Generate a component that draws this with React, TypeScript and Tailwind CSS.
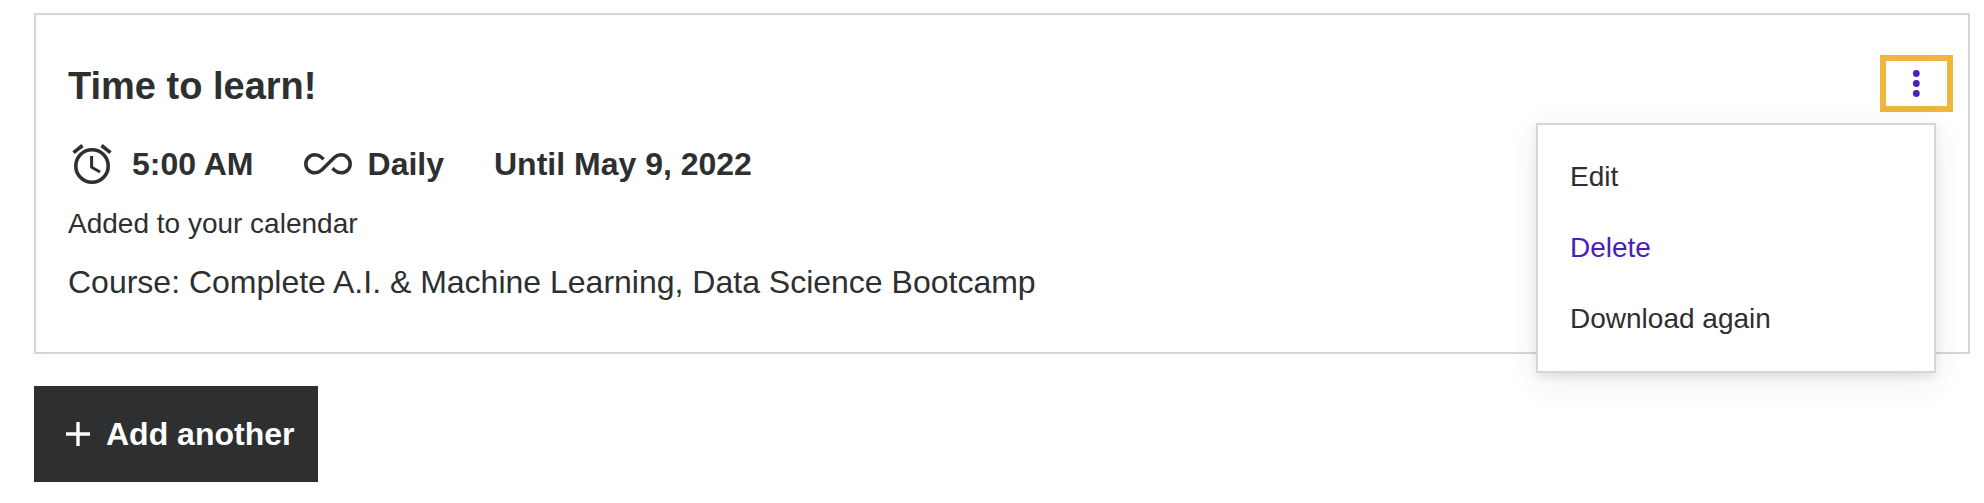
import { useState } from "react";

const menuItems = ["Edit", "Delete", "Download again"];

const AlarmIcon = () => (
  <svg
    className="size-12 shrink-0"
    viewBox="0 0 48 48"
    fill="none"
    stroke="currentColor"
    strokeWidth="3.6"
    aria-hidden="true"
  >
    <circle cx="24" cy="26" r="16.2" />
    <path d="M5.5 12.7 L14.5 5.5 M33.5 5.5 L42.5 12.7" />
    <path d="M23.6 16 V27.2 L32 32" strokeWidth="3" />
  </svg>
);

const InfinityIcon = () => (
  <svg
    className="size-12 shrink-0"
    viewBox="0 0 48 48"
    fill="none"
    stroke="currentColor"
    strokeWidth="3.5"
    aria-hidden="true"
  >
    <path d="M19.6 19.2 L17.4 17.3 C15.6 15.6 13.5 14.8 10.8 14.8 A9 9 0 0 0 10.8 32.8 C13.5 32.8 15.5 32 17.4 30.3 L30.6 17.3 C32.5 15.6 34.5 14.8 37.2 14.8 A9 9 0 0 1 37.2 32.8 C34.5 32.8 32.4 32 30.6 30.3 L28.4 28.4" />
  </svg>
);

const PlusIcon = () => (
  <svg
    className="size-10 shrink-0"
    viewBox="0 0 40 40"
    fill="none"
    stroke="currentColor"
    strokeWidth="3.4"
    aria-hidden="true"
  >
    <path d="M20 8 V32 M8 20 H32" />
  </svg>
);

export default function App() {
  const [isOpen, setIsOpen] = useState(true);

  return (
    <main className="bg-white pt-[13px] pr-[14px] pl-[34px] font-['Liberation_Sans',Arial,sans-serif] text-[#2d2f31]">
      <section className="relative border-2 border-[#d1d7dc] px-8 pt-[48px] pb-[48px]">
        <h2 className="text-[38px] leading-[46px] font-bold">
          Time to learn!
        </h2>
        <div className="mt-[31px] flex items-center gap-[50px] text-[32px] leading-[48px] font-bold">
          <div className="flex items-center gap-4">
            <AlarmIcon />
            <span>5:00 AM</span>
          </div>
          <div className="flex items-center gap-4">
            <InfinityIcon />
            <span>Daily</span>
          </div>
          <span>Until May 9, 2022</span>
        </div>
        <p className="mt-4 text-[28px] leading-[40px]">
          Added to your calendar
        </p>
        <p className="mt-4 text-[32px] leading-[44px]">
          Course: Complete A.I. &amp; Machine Learning, Data Science Bootcamp
        </p>

        <div className="absolute top-10 right-[15px]">
          <button
            aria-label="Reminder options"
            aria-expanded={isOpen}
            onClick={() => setIsOpen(!isOpen)}
            className="flex h-[57px] w-[73px] items-center justify-center border-6 border-[#f0b53e] text-[#4a20bd]"
          >
            <svg
              className="size-8"
              viewBox="0 0 32 32"
              fill="currentColor"
              aria-hidden="true"
            >
              <circle cx="15.3" cy="5.5" r="3.4" />
              <circle cx="15.3" cy="15.5" r="3.4" />
              <circle cx="15.3" cy="25.5" r="3.4" />
            </svg>
          </button>
        </div>
        {isOpen && (
          <ul className="absolute top-[108px] right-8 w-[400px] border-2 border-[#d1d7dc] bg-white pt-4 pb-[17px] shadow-[0_4px_8px_rgba(0,0,0,0.08),0_8px_32px_rgba(0,0,0,0.08)]">
            {menuItems.map((item) => (
              <li key={item}>
                <button
                  className={`w-full px-8 py-4 text-left text-[28px] leading-[39px] ${
                    item === "Delete" ? "text-[#4a20bd]" : ""
                  }`}
                >
                  {item}
                </button>
              </li>
            ))}
          </ul>
        )}
      </section>
      <button className="mt-8 flex h-24 items-center gap-2 bg-[#2d2f31] px-6 text-[32px] leading-[40px] font-bold text-white">
        <PlusIcon />
        Add another
      </button>
    </main>
  );
}
